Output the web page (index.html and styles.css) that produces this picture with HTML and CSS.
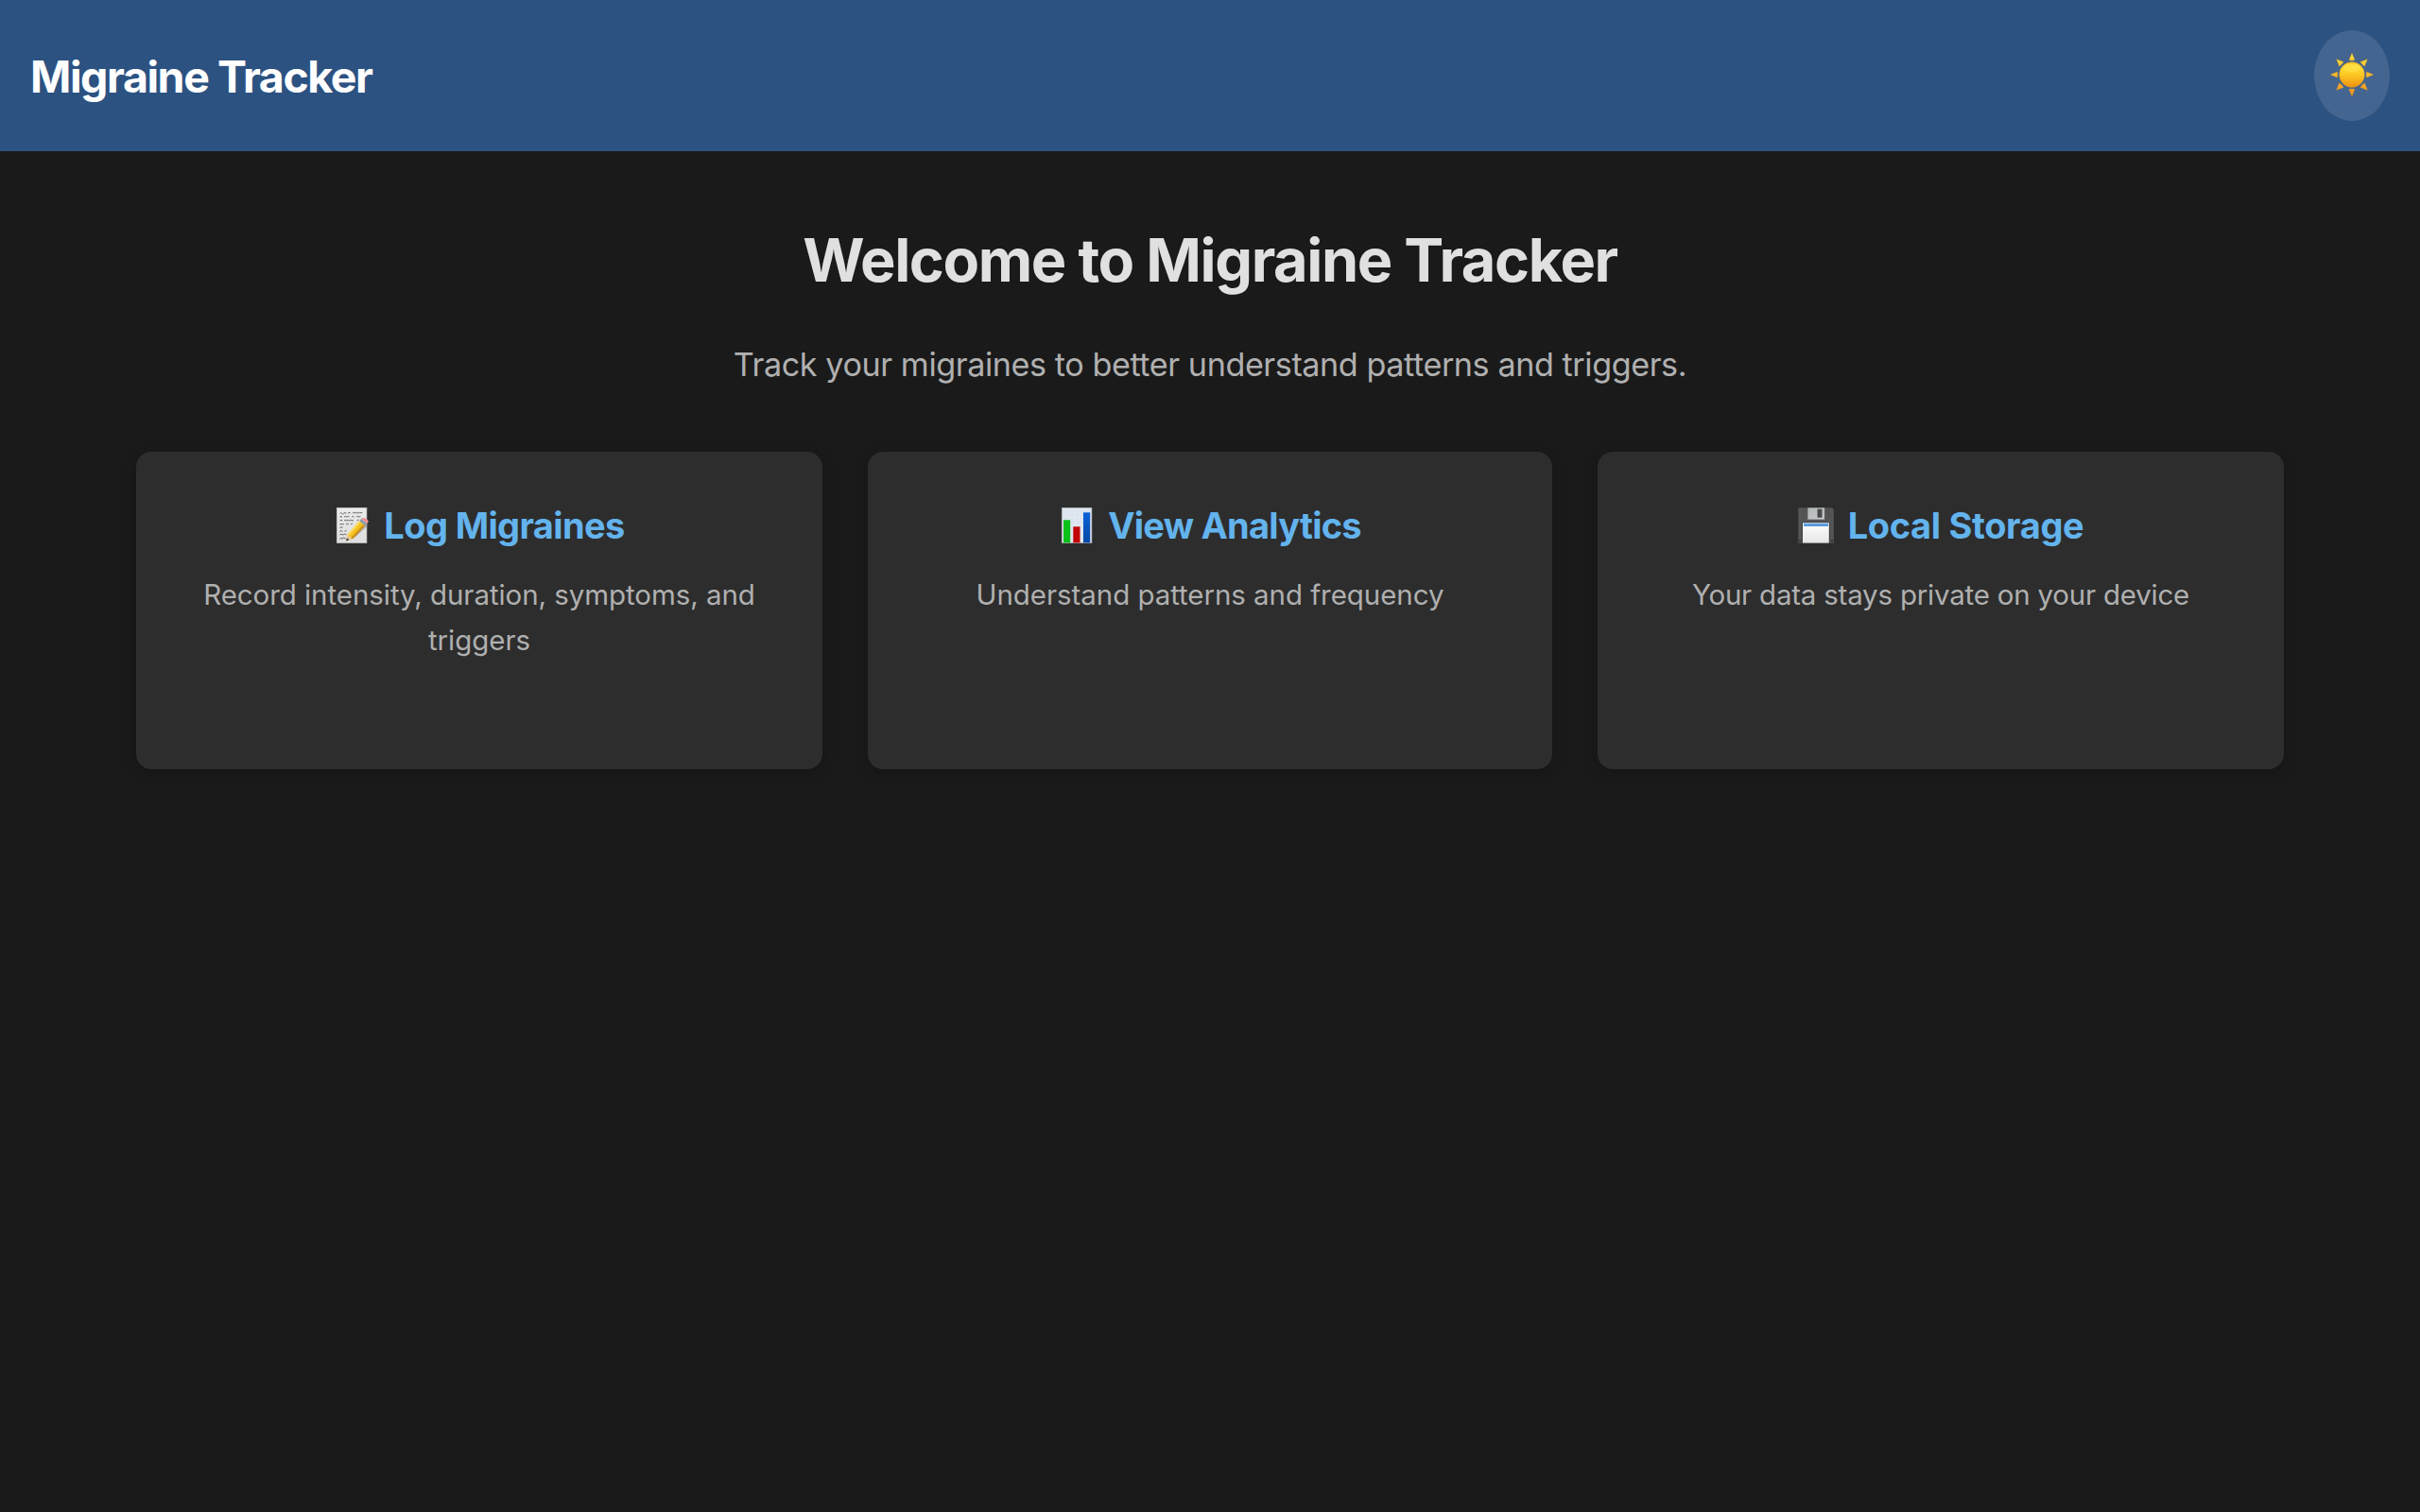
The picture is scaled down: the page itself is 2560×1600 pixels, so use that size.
FILE: index.html
```html
<!DOCTYPE html>
<html lang="en">
<head>
<meta charset="utf-8">
<title>Migraine Tracker</title>
<link rel="stylesheet" href="styles.css">
</head>
<body>
<header class="header">
  <div class="brand">Migraine Tracker</div>
  <button class="theme-toggle" type="button" aria-label="Toggle theme">
    <svg class="sun" viewBox="0 0 46 46">
      <defs>
        <linearGradient id="ray" gradientUnits="userSpaceOnUse" x1="0" y1="0" x2="0" y2="46"><stop offset="0" stop-color="#ffe23c"/><stop offset="1" stop-color="#f7901e"/></linearGradient>
        <linearGradient id="disc" x1="0" y1="0" x2="0" y2="1"><stop offset="0" stop-color="#fbc52c"/><stop offset=".2" stop-color="#fedb35"/><stop offset=".5" stop-color="#fcc824"/><stop offset="1" stop-color="#f0900f"/></linearGradient>
      </defs>
      <g fill="url(#ray)" stroke="#d99b2e" stroke-width=".4">
        <path d="M23 .3 26 7.500Q23 8.300 20 7.500Z"/>
        <path d="M23 45.700 26 38.500Q23 37.700 20 38.500Z"/>
        <path d="M.3 23 7.500 20Q8.300 23 7.500 26Z"/>
        <path d="M45.700 23 38.500 20Q37.700 23 38.500 26Z"/>
        <path d="M6.700 6.700 14.200 9.600Q12.500 12 9.600 14.200Z"/>
        <path d="M39.300 6.700 31.800 9.600Q33.500 12 36.400 14.200Z"/>
        <path d="M6.700 39.300 14.200 36.400Q12.500 34 9.600 31.800Z"/>
        <path d="M39.300 39.300 31.800 36.400Q33.500 34 36.400 31.800Z"/>
      </g>
      <circle cx="23" cy="23" r="13.4" fill="url(#disc)" stroke="#c1883a" stroke-width=".5"/>
      <ellipse cx="23" cy="16" rx="8.5" ry="4.5" fill="#ffe34a" opacity=".55"/>
    </svg>
  </button>
</header>

<main class="main">
  <h1 class="title">Welcome to Migraine Tracker</h1>
  <p class="subtitle">Track your migraines to better understand patterns and triggers.</p>

  <section class="cards">
    <article class="card">
      <h3 class="card-title log">
        <svg class="icon" viewBox="0 0 38 38">
          <defs>
            <linearGradient id="paper" x1="0" y1="0" x2="0" y2="1"><stop offset="0" stop-color="#ececec"/><stop offset="1" stop-color="#dedede"/></linearGradient>
          </defs>
          <rect x="3.3" y=".3" width="31.6" height="37.2" fill="url(#paper)" stroke="#c6c6c6" stroke-width=".7"/>
          <g fill="none" stroke="#666" stroke-width="1">
            <path d="M6.5 6.3q1-1.4 2 0t2 0l1.5-.8 1.5.8M15 6.2l2-.9 1 1M20 6l1.8-.7 1.2.9 1.4-.9 1.6.8 1.5-.8 1.5.6 1.5-.7"/>
            <path d="M6.5 10.2l1.5-.8 1 .9M11 10.1l1.5-.8 1.4.8 1.4-.8 1.2.8M19 10.1l1.4-.8 1.3.8M24 10l1.5-.7 1.5.8 1.4-.8"/>
            <path d="M6.5 14l1.5-.8 1.2.8M11 14l1.3-.8 1.5.8 1.4-.8 1.5.8 1.5-.8 1.5.8 1.3-.7M24.5 13.8l2-.8"/>
            <path d="M6.5 18l1.5-.8 1.5.8 1.4-.8M13 18l1.5-.8 1.5.8M18 17.700l2-.8"/>
            <path d="M6.5 21.5l1.5-.7 1.5.5"/>
            <path d="M6.5 25.3l1.5-.8 1.4.8M11.5 25.2l2-.8"/>
            <path d="M6.5 29l1.5-.8 1.5.8 2-.8 2 .5"/>
            <path d="M6.3 33.5l1.5-1.4.8 1.2 2-1.3 2 1"/>
          </g>
          <path d="M14 35.500 22 32 37 18.500 33.500 17 19 31Z" fill="#777" opacity=".5"/>
          <path d="M13.200 35.500 14.600 28.700 20 33.200Z" fill="#e9c48d"/>
          <path d="M13.200 35.500 13.800 32.300 16.200 34.300Z" fill="#333"/>
          <path d="M14.600 28.700 27.200 14.200 33 19.200 20 33.200Z" fill="#f5c022"/>
          <path d="M14.600 28.700 27.200 14.200 28.700 15.500 16 30Z" fill="#ffdb55"/>
          <path d="M18.500 32 31.500 17.900 33 19.200 20 33.200Z" fill="#cc8c13"/>
          <path d="M27.200 14.200 29.300 11.800 35.100 16.900 33 19.200Z" fill="#8b9caa"/>
          <path d="M29.300 11.800q1.800-1.800 5 .2t2.200 3.500l-1.400 1.400Z" fill="#f08f94"/>
        </svg>Log Migraines</h3>
      <p class="card-text">Record intensity, duration, symptoms, and triggers</p>
    </article>

    <article class="card">
      <h3 class="card-title view">
        <svg class="icon" viewBox="0 0 38 38">
          <defs>
            <linearGradient id="blue" x1="0" y1="0" x2="0" y2="1"><stop offset="0" stop-color="#0d62d8"/><stop offset="1" stop-color="#0549a5"/></linearGradient>
          </defs>
          <rect x="3.3" y=".3" width="31.600" height="37.2" fill="#dfe7f0" stroke="#aeb4ba" stroke-width=".7"/>
          <path d="M4 4H34.5M4 8H34.5M4 12H34.5M4 16H34.5M8 1V37M14 1V37M20 1V37M26 1V37" stroke="#d3dde7" stroke-width=".4"/>
          <rect x="5" y="13.3" width="7.2" height="24" fill="#08c018"/>
          <rect x="15.3" y="20.3" width="7.2" height="17" fill="#c20505"/>
          <rect x="26" y="5.3" width="7.2" height="32" fill="url(#blue)"/>
        </svg>View Analytics</h3>
      <p class="card-text">Understand patterns and frequency</p>
    </article>

    <article class="card">
      <h3 class="card-title local">
        <svg class="icon" viewBox="0 0 38 38">
          <defs>
            <linearGradient id="metal" x1="0" y1="0" x2="1" y2="1"><stop offset="0" stop-color="#b2b6b6"/><stop offset="1" stop-color="#c9cccc"/></linearGradient>
            <linearGradient id="label" x1="0" y1="0" x2="0" y2="1"><stop offset="0" stop-color="#fff"/><stop offset="1" stop-color="#e5e5e5"/></linearGradient>
          </defs>
          <path d="M.3.3H36L37.8 2V37.7H.3Z" fill="#555"/>
          <path d="M5.5.3V13M32.5.3V13" stroke="#4a4a4a" stroke-width=".6"/>
          <rect x="1.2" y="34" width="1.8" height="2.5" fill="#333"/>
          <rect x="35" y="34" width="1.8" height="2.5" fill="#333"/>
          <rect x="10.3" y=".3" width="17.7" height="12.5" fill="url(#metal)" stroke="#858989" stroke-width=".5"/>
          <rect x="20.5" y="1.7" width="5" height="9" fill="#484a4b"/>
          <path d="M4.3 37.7V17Q4.3 15.5 5.8 15.5H32Q33.5 15.5 33.5 17V37.7Z" fill="#333"/>
          <rect x="5" y="16.3" width="27.8" height="21.3" fill="url(#label)"/>
          <rect x="5" y="16.3" width="27.8" height=".9" fill="#a9c9ec"/>
          <rect x="6" y="17.2" width="26" height="2.7" fill="#4f94da"/>
        </svg>Local Storage</h3>
      <p class="card-text">Your data stays private on your device</p>
    </article>
  </section>
</main>
</body>
</html>
```
FILE: styles.css
```css
* {
  box-sizing: border-box;
  margin: 0;
  padding: 0;
}

body {
  min-height: 100vh;
  background: #1a1a1a;
  color: #e0e0e0;
  font-family: Inter, "Liberation Sans", sans-serif;
}

.header {
  display: flex;
  align-items: center;
  justify-content: space-between;
  height: 160px;
  padding: 0 32px;
  background: #2c5282;
}

.brand {
  padding-top: 2px;
  color: #fff;
  font-size: 46.5px;
  font-weight: 700;
  letter-spacing: -1.43px;
}

.theme-toggle {
  display: flex;
  align-items: center;
  justify-content: center;
  width: 80px;
  height: 96px;
  padding-bottom: 3px;
  border: 0;
  border-radius: 50%;
  background: rgba(255, 255, 255, 0.11);
}

.sun {
  width: 46px;
  height: 46px;
}

.main {
  padding: 64px 144px 0;
  text-align: center;
}

.title {
  margin-bottom: 31px;
  font-size: 63px;
  font-weight: 700;
  line-height: 102px;
  letter-spacing: -1.4px;
}

.subtitle {
  margin-bottom: 64px;
  color: #b0b0b0;
  font-size: 34.2px;
  line-height: 57px;
  letter-spacing: -0.44px;
}

.cards {
  display: grid;
  grid-template-columns: 726px 1fr 726px;
  gap: 48px;
}

.card {
  height: 336px;
  padding: 48px;
  border-radius: 16px;
  background: #2d2d2d;
  box-shadow: 0 4px 16px rgba(0, 0, 0, 0.2);
}

.card-title {
  display: flex;
  align-items: center;
  justify-content: center;
  margin-bottom: 18px;
  color: #63b3ed;
  font-size: 38px;
  font-weight: 700;
  line-height: 60px;
  padding-bottom: 1px;
  white-space: nowrap;
}

.log {
  letter-spacing: -0.62px;
}

.view {
  letter-spacing: -0.75px;
}

.local {
  letter-spacing: -0.35px;
}

.icon {
  flex: none;
  width: 38px;
  height: 38px;
  margin: -1px 15px 0 0;
}

.view .icon {
  margin-right: 14px;
}

.card-text {
  color: #b0b0b0;
  font-size: 29.5px;
  line-height: 48.4px;
  letter-spacing: -0.06px;
}

.local + .card-text {
  letter-spacing: -0.22px;
}
```
